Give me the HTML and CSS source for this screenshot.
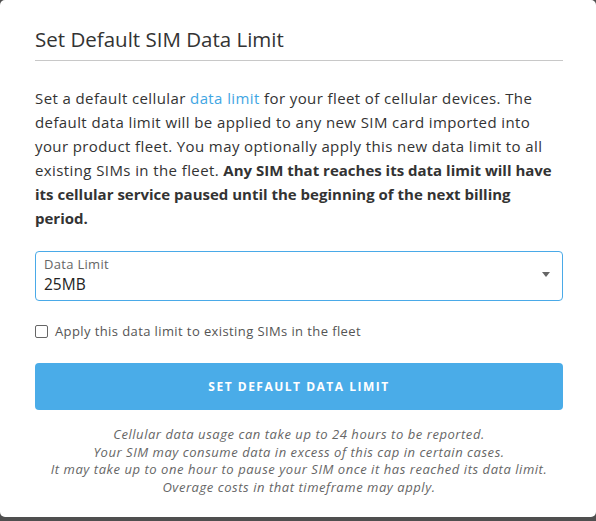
FILE: index.html
```html
<!DOCTYPE html>
<html>
<head>
<meta charset="utf-8">
<link rel="stylesheet" href="styles.css">
</head>
<body>
<div class="modal">
  <h1 class="title">Set Default SIM Data Limit</h1>
  <p class="intro">Set a default cellular <a class="link" href="#">data limit</a> for your fleet of cellular devices. The default data limit will be applied to any new SIM card imported into your product fleet. You may optionally apply this new data limit to all existing SIMs in the fleet. <strong>Any SIM that reaches its data limit will have its cellular service paused until the beginning of the next billing period.</strong></p>
  <div class="select">
    <div class="select-text">
      <div class="select-label">Data Limit</div>
      <div class="select-value">25MB</div>
    </div>
    <span class="caret"></span>
  </div>
  <label class="check-row"><span class="checkbox"></span><span class="check-label">Apply this data limit to existing SIMs in the fleet</span></label>
  <button class="btn">SET DEFAULT DATA LIMIT</button>
  <div class="notes">
    <div>Cellular data usage can take up to 24 hours to be reported.</div>
    <div>Your SIM may consume data in excess of this cap in certain cases.</div>
    <div>It may take up to one hour to pause your SIM once it has reached its data limit.</div>
    <div>Overage costs in that timeframe may apply.</div>
  </div>
</div>
</body>
</html>
```
FILE: styles.css
```css
html, body {
  margin: 0;
  padding: 0;
  background: #4f4f4f;
  height: 521px;
  overflow: hidden;
}
.modal {
  background: #fff;
  height: 517px;
  box-sizing: border-box;
  border-radius: 5px;
  padding: 24px 33px 0 35px;
  font-family: "Open Sans", sans-serif;
  color: #333;
}
.title {
  margin: 0;
  font-size: 20.5px;
  font-weight: 400;
  line-height: 30px;
  color: #333;
  padding-bottom: 6px;
  border-bottom: 1px solid #c8c8c8;
}
.intro {
  margin: 25px 0 0;
  padding-right: 11px;
  font-size: 15px;
  letter-spacing: 0.4px;
  line-height: 24px;
  color: #333;
}
.intro strong { font-weight: 700; letter-spacing: 0; }
.link { color: #3fa6e3; text-decoration: none; }
.select {
  margin-top: 21px;
  height: 50px;
  box-sizing: border-box;
  border: 1px solid #4aaae8;
  border-radius: 4px;
  display: flex;
  align-items: center;
  justify-content: space-between;
  padding: 0 12px 0 8px;
}
.select-label {
  font-size: 13px;
  letter-spacing: 0.3px;
  color: #666;
  line-height: 17px;
  margin-top: -2px;
}
.select-value {
  font-size: 15.5px;
  color: #222;
  line-height: 20px;
  margin-top: 1px;
}
.caret {
  width: 0; height: 0;
  border-left: 4px solid transparent;
  border-right: 4px solid transparent;
  border-top: 5px solid #666;
  margin-top: -4px;
}
.check-row {
  margin-top: 22px;
  display: flex;
  align-items: center;
  gap: 7px;
  height: 16px;
}
.checkbox {
  width: 11px; height: 11px;
  border: 1px solid #666;
  border-radius: 2px;
}
.check-label { font-size: 13px; letter-spacing: 0.4px; color: #555; }
.btn {
  display: block;
  width: 100%;
  margin-top: 24px;
  height: 47px;
  border: 0;
  border-radius: 4px;
  background: #4aace8;
  color: #fff;
  font-family: "Open Sans", sans-serif;
  font-weight: 700;
  font-size: 12px;
  letter-spacing: 1.5px;
}
.notes {
  margin-top: 16px;
  text-align: center;
  font-style: italic;
  font-size: 13px;
  letter-spacing: 0.55px;
  line-height: 17.5px;
  color: #666;
}
```
